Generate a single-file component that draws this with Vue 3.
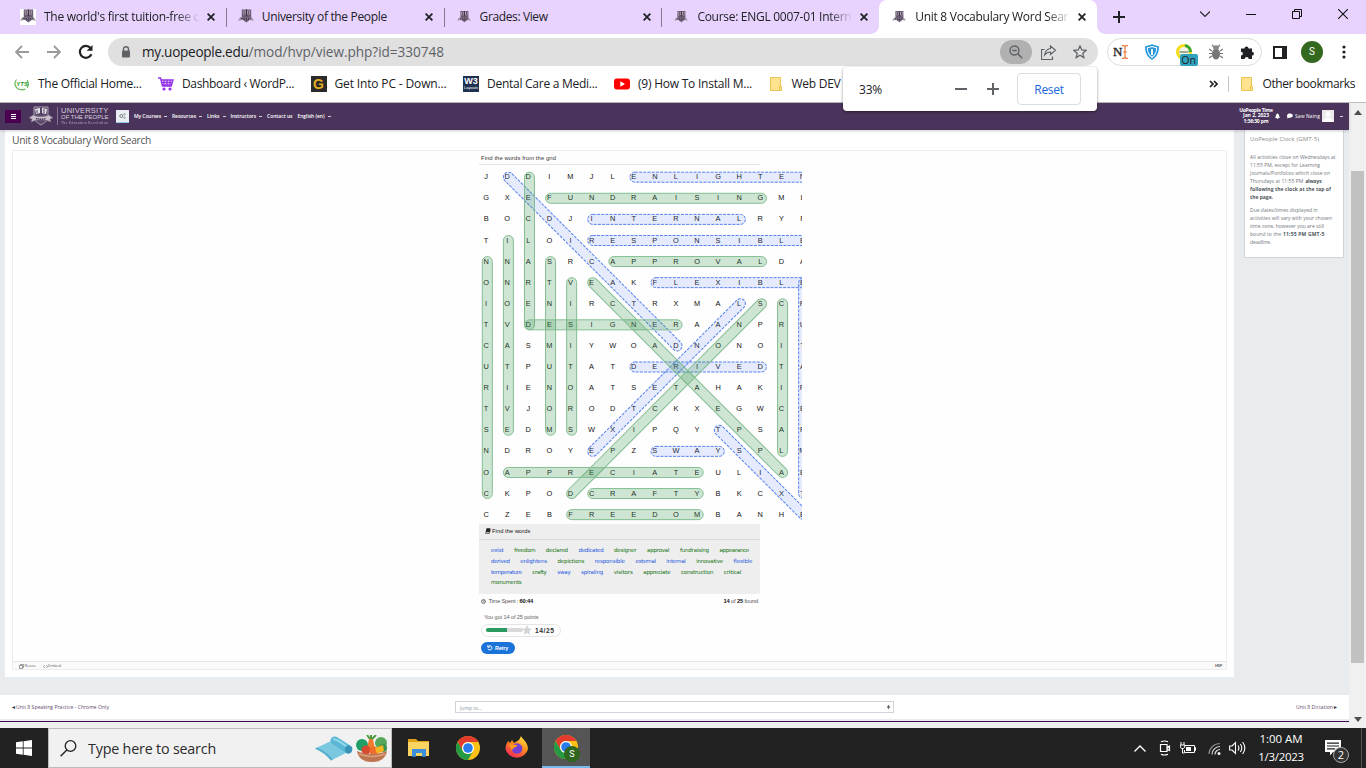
<script setup>
const fit = (el, { value }) => {
  el.style.letterSpacing = '0px'
  const n = el.textContent.length
  const w = el.getBoundingClientRect().width
  el.style.letterSpacing = (value - w) / n + 'px'
}
const vFit = { mounted: fit }

const tabs = [
  { t: "The world's first tuition-free c", w: 155, cls: 'fade', box: true },
  { t: 'University of the People', w: 125 },
  { t: 'Grades: View', w: 68 },
  { t: 'Course: ENGL 0007-01 Intern', w: 154, cls: 'fade last' },
  { t: 'Unit 8 Vocabulary Word Sear', w: 153, cls: 'fade', active: true },
]

const menu = [
  ['My Courses', 27, 1], ['Resources', 24, 1], ['Links', 12.5, 1],
  ['Instructors', 25.5, 1], ['Contact us', 25.5, 0], ['English (en)', 27, 1],
]

const rows = [
  'JDDIMJLENLIGHTEN', 'GXEFUNDRAISINGML', 'BOCDJINTERNALRYF', 'TILOIRESPONSIBLE',
  'NNASRCAPPROVALDA', 'ONRTVEAKFLEXIBLE', 'IOENIRCTRXMALSCR', 'TVDESIGNERAANPRU',
  'CASMIYWOADNONOIT', 'UTPUTATDERIVEDTA', 'RIENOATSETAHAKIR', 'TVJORODTCKXEGWCE',
  'SEDMSWXIPQYTPSAP', 'NDROYEPZSWAYSPLM', 'OAPPRECIATEULIAE', 'CKPODCRAFTYBKCXT',
  'CZEBFREEDOMBANHE',
]
const P = 21.09
const found = [
  [2, 0, 2, 7], [3, 1, 13, 1], [6, 4, 13, 4], [1, 3, 1, 12], [0, 4, 0, 15], [3, 4, 3, 12],
  [4, 5, 4, 12], [2, 7, 9, 7], [5, 5, 14, 14], [4, 15, 13, 6], [14, 6, 14, 13],
  [1, 14, 10, 14], [5, 15, 10, 15], [4, 16, 10, 16],
]
const missed = [
  [1, 0, 9, 8], [7, 0, 16, 0], [5, 2, 12, 2], [5, 3, 15.6, 3], [8, 5, 15.6, 5],
  [5, 13, 12, 6], [7, 9, 13, 9], [8, 13, 11, 13], [11, 12, 15, 16], [15, 5, 15, 15],
]
const capsule = ([a, b, c, d]) => {
  const x = 9.3 + a * P
  const y = 12.2 + b * P
  const len = Math.hypot(c - a, d - b) * P
  const ang = (Math.atan2(d - b, c - a) * 180) / Math.PI
  return { x: x - 5, y: y - 5, width: len + 10, height: 10, rx: 5, transform: `rotate(${ang} ${x} ${y})` }
}

const words = [
  [['exist', 38, 1], ['freedom', 63], ['declared', 66], ['dedicated', 75, 1], ['designer', 67], ['approval', 67], ['fundraising', 87], ['appearance', 88]],
  [['derived', 56, 1], ['enlightens', 80, 1], ['depictions', 80], ['responsible', 90, 1], ['external', 61, 1], ['internal', 58, 1], ['innovative', 80], ['flexible', 56, 1]],
  [['temperature', 92, 1], ['crafty', 43], ['sway', 40, 1], ['spiraling', 66, 1], ['visitors', 57], ['appreciate', 81], ['construction', 97], ['critical', 52]],
  [['monuments', 91]],
]

const bookmarks = [
  { i: 'yts', t: 'The Official Home...', w: 103.5 },
  { i: 'cart', t: 'Dashboard ‹ WordP...', w: 112 },
  { i: 'g', t: 'Get Into PC - Down...', w: 112 },
  { i: 'w3', t: 'Dental Care a Medi...', w: 110.5 },
  { i: 'yt', t: '(9) How To Install M...', w: 114 },
  { i: 'folder', t: 'Web DEV', w: 49 },
]
</script>

<template>
  <div class="screen">
    <svg class="defs" width="0" height="0">
      <symbol id="crest" viewBox="0 0 24 20">
        <path d="M5 1h14v10c0 4-4 6-7 8-3-2-7-4-7-8z" fill="#5d4a6b" stroke="#aaa1b1" stroke-width="1" />
        <path d="M6 3l5-1v5L7 8zM13 2l5 1-1 5-4-1z" fill="#e7e3ea" />
        <path d="M8 4v3M15 3v4M12 1v8" stroke="#4b345b" stroke-width="1" />
        <path d="M0 12l4-3c5 2 11 2 16 0l4 3-3 1 1 3c-7-3-13-3-20 0l1-3z" fill="#c6bfcb" stroke="#77687f" stroke-width=".6" />
        <path d="M7 12.500c3 .8 7 .8 10 0" stroke="#4b345b" stroke-width="1.400" fill="none" stroke-dasharray="1.400 .6" />
      </symbol>
      <symbol id="favicon" viewBox="0 0 17 15">
        <path d="M4 0h10v8c0 3-3 4-5 6-2-2-5-3-5-6z" fill="#6b5c73" />
        <path d="M5 1.500l3-.5v4l-2.500.5zM10 1l3 .5-.5 4-2.500-.5z" fill="#c9c3cd" />
        <path d="M6.500 1.500v3.500M11.500 1.500v3.500M9 0v7" stroke="#3a2843" />
        <path d="M0 12l2.500-4c4 1.300 8 1.300 12 0l2.500 4-3-.5c-4-1.500-7-1.500-11 0z" fill="#9c93a1" />
        <path d="M3.500 9.600q5 1.200 10 0" stroke="#33233c" stroke-width="1.400" fill="none" stroke-dasharray="1.600 .7" />
      </symbol>
      <symbol id="chrome" viewBox="0 0 24 24">
        <circle cx="12" cy="12" r="12" fill="#fbc116" />
        <path d="M1.600 6A12 12 0 0 1 22.400 6H12a6 6 0 0 0-5.200 9z" fill="#e33b2e" />
        <path d="M1.600 6A12 12 0 0 0 12 24l5.200-9a6 6 0 0 1-10.400 0z" fill="#249a45" />
        <circle cx="12" cy="12" r="6" fill="#fff" /><circle cx="12" cy="12" r="4.800" fill="#2a7bee" />
      </symbol>
      <symbol id="folder" viewBox="0 0 12 14">
        <path d="M.5.5h10v13H.5z" fill="#ffe38e" stroke="#e9c452" /><path d="M9.500 9.500h2v4h-2z" fill="#ffe38e" stroke="#e9c452" />
      </symbol>
    </svg>

    <header class="tabs">
      <div v-for="(tab, i) in tabs" :key="i" class="tab" :class="{ active: tab.active, divided: i < 3 }">
        <span class="fav" :class="{ boxed: tab.box, small: i > 1 }"><svg width="16" height="15" ><use href="#favicon" /></svg></span>
        <span class="label" :class="tab.cls"><span v-fit="tab.w">{{ tab.t }}</span></span>
        <svg class="close" width="8" height="8" viewBox="0 0 8 8"><path d="M.6.6l6.800 6.800M7.400.6L.6 7.400" stroke="#202124" stroke-width="1.800" /></svg>
      </div>
      <svg class="plus" width="12" height="12"><path d="M6 0v12M0 6h12" stroke="#202124" stroke-width="2" /></svg>
      <div class="winctl">
        <svg width="10" height="10"><path d="M0 2.500l5 5 5-5" fill="none" stroke="#222" stroke-width="1.100" /></svg>
        <svg width="10" height="10"><path d="M0 5.500h10" stroke="#111" /></svg>
        <svg width="10" height="10"><path d="M.5 2.500h7v7h-7zM2.500 2.500v-2h7v7h-2" fill="none" stroke="#111" /></svg>
        <svg width="10" height="10"><path d="M0 0l10 10M10 0L0 10" stroke="#111" stroke-width="1.100" /></svg>
      </div>
    </header>

    <div class="toolbar">
      <svg class="nav1" width="14" height="14"><path d="M14 7H1M7 1L1 7l6 6" fill="none" stroke="#9a9a9a" stroke-width="1.800" /></svg>
      <svg class="nav2" width="14" height="14"><path d="M0 7h13M7 1l6 6-6 6" fill="none" stroke="#9a9a9a" stroke-width="1.800" /></svg>
      <svg class="nav3" width="16" height="16"><path d="M13.400 10.200A6 6 0 1 1 12.500 4" fill="none" stroke="#202124" stroke-width="2.200" /><path d="M14.500 1v5.800H8.700z" fill="#202124" /></svg>
      <div class="omni">
        <svg width="10" height="12"><path d="M2.500 5V3a2.500 2.300 0 0 1 5 0v2" fill="none" stroke="#5f6368" stroke-width="1.400" /><rect x="1" y="4.400" width="8" height="7" rx="1" fill="#5f6368" /></svg>
        <span class="url"><b v-fit="106.500">my.uopeople.edu</b><i v-fit="195.500">/mod/hvp/view.php?id=330748</i></span>
        <span class="zoomchip"><svg width="14" height="14"><circle cx="5.500" cy="5.500" r="4.500" fill="none" stroke="#5f6368" stroke-width="1.400" /><path d="M3.300 5.500h4.400M8.800 8.800l4.400 4.400" stroke="#5f6368" stroke-width="1.500" /></svg></span>
        <svg class="share" width="16" height="15"><path d="M3.500 4.500h-3v10h11v-3" fill="none" stroke="#5f6368" stroke-width="1.200" /><path d="M9.500 1l5 4.200-5 4.200V7C7 7 5 8.200 3.600 10 4 6.500 6 4 9.500 3.500z" fill="none" stroke="#5f6368" stroke-width="1.200" /></svg>
        <svg class="star" width="14" height="14" viewBox="0 0 14 14"><path d="M7 1l1.800 4 4.300.4-3.300 2.900 1 4.300L7 10.300l-3.800 2.300 1-4.300L.9 5.400 5.200 5z" fill="none" stroke="#5f6368" stroke-width="1.300" /></svg>
      </div>
      <div class="exts">
        <span class="nicon">N<svg width="6" height="14"><path d="M0 .7h2l1 1 1-1h2M3 1.500v11M0 13.300h2l1-1 1 1h2M1 7h4" fill="none" stroke="#ee7b3c" stroke-width="1.200" /></svg></span>
        <svg width="14" height="16" viewBox="0 0 16 16" preserveAspectRatio="none"><path d="M0 2.500L8 .3l8 2.200C16 9 13 13.500 8 15.800 3 13.500 0 9 0 2.500z" fill="#2396de" /><path d="M2.500 4L8 2.500 13.500 4c-.3 4.500-2.200 7.500-5.500 9.400C4.700 11.500 2.800 8.500 2.500 4z" fill="none" stroke="#fff" stroke-width="1.100" /><path d="M8 5v6" stroke="#fff" stroke-width="2.200" /></svg>
        <span class="seo"><svg width="17" height="16"><circle cx="8" cy="8" r="6.500" fill="#f5f5ed" stroke="#f2dc1c" stroke-width="3" /><path d="M9 1.500A6.500 6.500 0 0 1 14.500 8" fill="none" stroke="#35a83b" stroke-width="3" /><path d="M3.500 8h9" stroke="#88906b" stroke-width="1.500" /></svg><em>On</em></span>
        <svg width="14" height="16"><g stroke="#777" stroke-width="1.200"><path d="M0 5l3 2M14 5l-3 2M0 9.500h14M0 14l3-2M14 14l-3-2M3 1l2 2M11 1L9 3" /></g><ellipse cx="7" cy="10" rx="4" ry="5.500" fill="#777" /><ellipse cx="7" cy="3.600" rx="3" ry="2.300" fill="#888" /></svg>
        <svg width="15" height="15" viewBox="0 0 15 15"><path d="M1 3.500h3.500a2 2 0 1 1 4 0H12v3.300a1.900 1.900 0 1 1 0 3.800V14H8.700a2 2 0 0 0-4 0H1v-3.500a1.900 1.900 0 0 0 0-3.800z" fill="#202124" /></svg>
      </div>
      <svg class="side" width="14" height="13"><path d="M1 1h12v11H1z" fill="none" stroke="#202124" stroke-width="2" /><path d="M9 1h4v11H9z" fill="#202124" /></svg>
      <span class="me">S</span>
      <svg class="dots" width="4" height="14"><circle cx="2" cy="2" r="1.600" /><circle cx="2" cy="7" r="1.600" /><circle cx="2" cy="12" r="1.600" /></svg>
    </div>

    <div class="bookmarks">
      <div v-for="b in bookmarks" :key="b.t" class="bm" :class="b.i">
        <svg v-if="b.i === 'yts'" width="16" height="16"><path d="M2.500 3.500a6.500 6.500 0 0 0 0 8c2 2.500 6 3 9 1.500M13 4a7 7 0 0 1 0 8" fill="none" stroke="#64b956" stroke-width="1.200" /><text x="2.300" y="10" class="ytst">YTS</text></svg>
        <svg v-else-if="b.i === 'cart'" width="16" height="15"><path d="M0 1h2.500l2 8H14M3 3h12l-1.500 5H4M6 3v5M9 3v5M12 3v5M3.500 5.500h11" fill="none" stroke="#9333ea" stroke-width="1.400" /><circle cx="6" cy="12" r="1.600" fill="#9333ea" /><circle cx="12" cy="12" r="1.600" fill="#9333ea" /></svg>
        <span v-else-if="b.i === 'g'" class="gsq">G</span>
        <span v-else-if="b.i === 'w3'" class="wsq">W3<small>Layouts</small></span>
        <svg v-else-if="b.i === 'yt'" width="16" height="12"><rect y=".5" width="16" height="11" rx="3" fill="#f00" /><path d="M6.300 3.300v5.400L11 6z" fill="#fff" /></svg>
        <svg v-else width="12" height="14"><use href="#folder" /></svg>
        <span class="bt"><span v-fit="b.w">{{ b.t }}</span></span>
      </div>
      <svg class="more" width="9" height="8"><path d="M1 1l3 3-3 3M5 1l3 3-3 3" fill="none" stroke="#202124" stroke-width="1.700" /></svg>
      <i class="bsep"></i>
      <svg class="of" width="12" height="14"><use href="#folder" /></svg>
      <span class="bt other"><span v-fit="92.500">Other bookmarks</span></span>
    </div>

    <div class="zoompop">
      <span class="pct"><span v-fit="23">33%</span></span>
      <svg class="zm" width="12" height="12"><path d="M0 6h12" stroke="#5f6368" stroke-width="2" /></svg>
      <svg class="zp" width="12" height="12"><path d="M6 0v12M0 6h12" stroke="#5f6368" stroke-width="2" /></svg>
      <button class="reset"><span v-fit="29.500">Reset</span></button>
    </div>

    <div class="viewport">
      <div class="page">
        <nav class="navbar">
          <span class="burger"><svg width="5" height="5"><path d="M0 .5h5M0 2.500h5M0 4.500h5" stroke="#fff" /></svg></span>
          <svg class="logo" width="24" height="20"><use href="#crest" /></svg>
          <div class="brand"><span class="b1" v-fit="47.500">UNIVERSITY</span><span class="b2" v-fit="47.500">OF THE PEOPLE</span><span class="b3" v-fit="47">The Education Revolution</span></div>
          <span class="gear"><svg width="7" height="6"><circle cx="2.300" cy="3" r="1.500" fill="none" stroke="#777" /><circle cx="5.500" cy="1.300" r=".8" fill="none" stroke="#888" stroke-width=".7" /><circle cx="5.500" cy="4.700" r=".8" fill="none" stroke="#888" stroke-width=".7" /></svg></span>
          <div class="menu"><span v-for="m in menu" :key="m[0]" class="mi"><span v-fit="m[1]">{{ m[0] }}</span><i v-if="m[2]"></i></span></div>
          <div class="clock"><span v-fit="33.500">UoPeople Time</span><span v-fit="26">Jan 2, 2023</span><span v-fit="25">1:36:30 pm</span></div>
          <svg class="bell" width="5" height="6"><path d="M0 5c1-1 .6-3 1.500-3.800L2.500.3l1 .9C4.400 2 4 4 5 5zM1.700 5.300h1.600v.7H1.700z" fill="#fff" /></svg>
          <svg class="chat" width="7" height="6"><path d="M1 5.500L1.500 4C.3 2.500 1.500.5 3.800.5S7 1.500 6.800 3 4.500 4.800 3 4.700z" fill="#fff" /></svg>
          <span class="uname"><span v-fit="25">Saw Naing</span></span>
          <svg class="uava" width="12" height="12"><path d="M0 0h12v12H0z" fill="#eceaea" /><circle cx="6" cy="4.300" r="2.500" fill="#fff" /><path d="M1.500 12c0-6 9-6 9 0z" fill="#fff" /></svg>
          <i class="ucaret"></i>
        </nav>

        <div class="cols">
          <main class="main">
            <h1><span v-fit="139">Unit 8 Vocabulary Word Search</span></h1>
            <div class="frame">
              <section class="game">
                <div class="task"><span v-fit="75">Find the words from the grid</span></div>
                <svg class="grid" width="324" height="356" viewBox="0 0 324 356">
                  <g class="letters">
                    <template v-for="(r, y) in rows" :key="y">
                      <text v-for="(c, x) in r" :key="x" :x="8.100 + x * P" :y="14.300 + y * P">{{ c }}</text>
                    </template>
                  </g>
                  <rect v-for="(w, i) in missed" :key="'m' + i" class="missed" v-bind="capsule(w)" />
                  <rect v-for="(w, i) in found" :key="'f' + i" class="found" v-bind="capsule(w)" />
                </svg>
                <div class="vocab">
                  <div class="vh"><svg width="6" height="6"><path d="M1.500.3h4L4.600 4.300H.6z" fill="#222" /><path d="M.6 4.300v1.200h3.700l1.200-4" fill="none" stroke="#222" stroke-width=".6" /></svg><span v-fit="38.500">Find the words</span></div>
                  <div v-for="(r, i) in words" :key="i" class="vr">
                    <span v-for="w in r" :key="w[0]" :class="{ blue: w[2] }" v-fit="w[1] / 3">{{ w[0] }}</span>
                  </div>
                </div>
                <div class="status">
                  <svg width="5" height="5"><circle cx="2.500" cy="2.500" r="1.900" fill="none" stroke="#444" stroke-width=".8" /><path d="M2.500 1.300v1.400h1" fill="none" stroke="#444" stroke-width=".6" /></svg>
                  <span class="ts" v-fit="29.500">Time Spent :</span><b v-fit="13.500">60:44</b>
                  <span class="cnt" v-fit="34.500"><b>14</b> of <b>25</b> found</span>
                </div>
                <div class="got"><span v-fit="54.500">You got 14 of 25 points</span></div>
                <div class="score"><span class="meter"><i></i></span><svg width="10" height="10" viewBox="0 0 10 10"><path d="M5 0l1.500 3.300 3.500.4-2.600 2.400.7 3.600L5 7.900 1.900 9.700l.7-3.600L0 3.700l3.500-.4z" fill="#d4d6d6" /></svg><b v-fit="19.500">14/25</b></div>
                <div class="retry"><svg width="6" height="6"><path d="M1 3.800A2.100 2.100 0 1 0 1.500 1.300M.8.2v2h2" fill="none" stroke="#fff" stroke-width="1" /></svg><span v-fit="13">Retry</span></div>
              </section>
              <div class="h5bar">
                <svg width="5" height="5"><path d="M.5 1.500h3v3h-3zM1.500 1.500v-1h3v3h-1" fill="none" stroke="#777" stroke-width=".7" /></svg><span v-fit="11.500">Reuse</span>
                <svg class="emb" width="5" height="5"><path d="M1.700 1L.4 2.500 1.700 4M3.300 1l1.300 1.500L3.300 4" fill="none" stroke="#777" stroke-width=".7" /></svg><span v-fit="13">Embed</span>
                <b v-fit="7">H5P</b>
              </div>
            </div>
          </main>
          <aside class="block">
            <h2><span v-fit="69">UoPeople Clock (GMT-5)</span></h2>
            <p>
              <span><s v-fit="85.700">All activities close on Wednesdays at</s></span>
              <span><s v-fit="70">11:55 PM, except for Learning</s></span>
              <span><s v-fit="80">Journals/Portfolios which close on</s></span>
              <span><s v-fit="53.200">Thursdays at 11:55 PM</s><b class="gap" v-fit="16.300">always</b></span>
              <span><b v-fit="81">following the clock at the top of</b></span>
              <span><b v-fit="23">the page.</b></span>
            </p>
            <p>
              <span><s v-fit="67.700">Due dates/times displayed in</s></span>
              <span><s v-fit="82">activities will vary with your chosen</s></span>
              <span><s v-fit="74">time zone, however you are still</s></span>
              <span><s v-fit="31">bound to the</s><b class="gap" v-fit="41.500">11:55 PM GMT-5</b></span>
              <span><s v-fit="21.500">deadline.</s></span>
            </p>
          </aside>
        </div>

        <footer class="jump">
          <span class="prev"><i>◄</i><span v-fit="93">Unit 8 Speaking Practice - Chrome Only</span></span>
          <div class="sel"><span v-fit="22">Jump to...</span><svg width="3" height="4"><path d="M0 1.700L1.500 0 3 1.700zM0 2.300L1.500 4 3 2.300z" fill="#333" /></svg></div>
          <span class="next"><span v-fit="37">Unit 8 Dictation</span><i>►</i></span>
        </footer>
        <div class="pageend"></div>
      </div>
      <div class="scroll">
        <svg width="8" height="5"><path d="M0 5l4-5 4 5z" fill="#505050" /></svg>
        <div class="thumb"></div>
        <svg class="dn" width="8" height="5"><path d="M0 0l4 5 4-5z" fill="#505050" /></svg>
      </div>
    </div>

    <div class="taskbar">
      <div class="start"><svg width="16" height="16"><path d="M0 2.300L6.800 1.300v6.300H0zM7.600 1.200L16 0v7.600H7.600zM0 8.400h6.800v6.300L0 13.700zM7.600 8.400H16V16l-8.400-1.200z" fill="#fff" /></svg></div>
      <div class="search">
        <svg width="17" height="17"><circle cx="10.500" cy="6" r="5.300" fill="none" stroke="#222" stroke-width="1.300" /><path d="M6.800 9.900L.6 16.200" stroke="#222" stroke-width="1.400" /></svg>
        <span class="stx"><span v-fit="128">Type here to search</span></span>
        <svg class="mat" width="38" height="25"><path d="M0 12.500L16 5l17 11-17 8.500c-4-5-9-9-16-12z" fill="#7ac8e0" /><path d="M0 12.500c7 3 12 7 16 12l2-1c-4-5-9-9-16-12z" fill="#58aecb" /><path d="M17 1.500c2-1.500 4-1 6 .2L36 10c3 3 1 8-4 7.500L17 7.500c-2-2-2-4.500 0-6z" fill="#59b6d4" /><path d="M18 3c4 0 10 5 16 9" stroke="#92d7ea" stroke-width="2" fill="none" /><ellipse cx="33.500" cy="13.500" rx="3.500" ry="4" fill="#3a94b8" /></svg>
        <svg class="bowl" width="32" height="27"><circle cx="6" cy="10" r="6" fill="#1f9f67" /><circle cx="25" cy="8" r="6" fill="#55a85c" /><circle cx="27" cy="13" r="4" fill="#3c9250" /><path d="M11 14l2-10h4l2 10z" fill="#f07c2e" /><path d="M14 4L11 0M15 4V0M16 4l4-4" stroke="#4c9a3d" stroke-width="2" /><circle cx="10" cy="15" r="4.500" fill="#d9492f" /><circle cx="18" cy="16" r="4.500" fill="#ee6b2b" /><path d="M19 13l8-3 1 6-7 3z" fill="#f6b51e" /><path d="M1 16c8 4 21 4 30 0-1 6-5 11-15 11S2 22 1 16z" fill="#bd7552" /><path d="M3 19c8 3 18 3 26 0" stroke="#dda17e" stroke-width="1.500" fill="none" /></svg>
      </div>
      <div class="app"><svg width="22" height="18"><path d="M0 0h8l2 2h11v5H0z" fill="#e2a217" /><path d="M0 3h21v14H0z" fill="#fcd462" /><path d="M4 17.800V10h14v7.800h-4V14H8v3.800z" fill="#3b8fdd" /></svg></div>
      <div class="app"><svg width="24" height="24"><use href="#chrome" /></svg></div>
      <div class="app"><svg width="24" height="24" viewBox="0 0 24 24"><defs><linearGradient id="fx" x1=".8" y1="0" x2=".2" y2="1"><stop offset="0" stop-color="#ffe847" /><stop offset=".45" stop-color="#ff8a1c" /><stop offset="1" stop-color="#f5205c" /></linearGradient></defs><path d="M3 5l2 2 2-3 2 3 5-3 2-4c1 3 7 6 7 13A11.500 11 0 0 1 .5 13C.5 9 2 7 3 5z" fill="url(#fx)" /><circle cx="12" cy="12.500" r="5.300" fill="#7540d2" /><path d="M4 9c3-1 5 0 8 0 1 2-3 2-4 4s-2 0-4-4z" fill="#ff9b1f" /></svg></div>
      <div class="app on"><svg width="24" height="24"><use href="#chrome" /></svg><em>S</em></div>
      <div class="tray">
        <svg width="12" height="7"><path d="M.5 6.500L6 1l5.500 5.500" fill="none" stroke="#fff" stroke-width="1.300" /></svg>
        <svg class="t2" width="12" height="16"><path d="M1.500 4.500h6.500v7H1.500zM8 7.500L10.500 6v4.500L8 9M2 1.800Q5.500.2 9 1.800M2 14.200Q5.500 15.800 9 14.200" fill="none" stroke="#fff" stroke-width="1.200" /></svg>
        <svg class="t3" width="16" height="12"><path d="M5 3.500h9.500v7H4.500V8M14.500 5.500h1v3h-1M1 0v3M4 0v3M.3 3h4.400v2L3.500 6.500H1.500L.3 5zM2.500 6v5h2" fill="none" stroke="#fff" /><path d="M6 5h5v4H6z" fill="#fff" /></svg>
        <svg class="t4" width="13" height="13"><path d="M1 12A11 11 0 0 1 12 1.500" fill="none" stroke="#888" stroke-width="1.200" /><path d="M4 12.500a8 8 0 0 1 8-8M7 12.500a5 5 0 0 1 5-5" fill="none" stroke="#ddd" stroke-width="1.200" /><circle cx="11" cy="11.500" r="1.500" fill="#fff" /></svg>
        <svg class="t5" width="17" height="14"><path d="M.6 5h2.500L6.500 1.500v11L3.100 9H.6z" fill="none" stroke="#fff" stroke-width="1.100" /><path d="M9 4.500q1.800 2.500 0 5M11.300 3q3 4 0 8M13.600 1q4.500 6 0 12" fill="none" stroke="#fff" stroke-width="1.100" /></svg>
        <div class="time"><span v-fit="43">1:00 AM</span><span v-fit="45.500">1/3/2023</span></div>
        <div class="notif"><svg width="16" height="16"><path d="M0 0h16v12H8l-3 3.500V12H0z" fill="#fff" /><path d="M2 3.200h12M2 6h12M2 8.800h8" stroke="#222" stroke-width="1.200" /></svg><em>2</em></div>
      </div>
    </div>
  </div>
</template>

<style>
body { margin: 0; overflow: hidden; }
</style>

<style scoped>
* { box-sizing: border-box; }
svg { display: block; flex: none; }
i, em { font-style: normal; }
s { text-decoration: none; }
.defs { position: absolute; }
.screen { position: relative; width: 1366px; height: 768px; overflow: hidden; display: flex; flex-direction: column; font-family: "Open Sans", "Noto Sans", sans-serif; white-space: nowrap; background: #fff; color: #202124; }
.screen span, .screen b, .block s { display: inline-block; flex: none; }

.tabs { height: 34px; background: #e8d3ff; display: flex; padding-left: 8px; flex: none; }
.tab { width: 217.8px; height: 34px; padding: 0 0 0 12px; display: flex; align-items: center; position: relative; flex: none; }
.tab.divided::after { content: ""; position: absolute; right: -1px; top: 8px; width: 1px; height: 19px; background: #82778e; }
.tab.active { background: #fff; border-radius: 8px 8px 0 0; }
.tab.active::before, .tab.active::after { content: ""; position: absolute; bottom: 0; width: 8px; height: 8px; }
.tab.active::before { left: -8px; background: radial-gradient(circle at 0 0, #e8d3ff 7.5px, #fff 8px); }
.tab.active::after { right: -8px; background: radial-gradient(circle at 8px 0, #e8d3ff 7.5px, #fff 8px); }
.fav { width: 16px; height: 16px; }
.fav.boxed { background: #fff; }
.fav.small svg { height: 12px; margin-top: 2px; }
.label { width: 156px; margin: 0 7px 0 8px; overflow: hidden; font-size: 12px; line-height: 20px; }
.fade { -webkit-mask-image: linear-gradient(90deg, #000 132px, transparent 156px); }
.plus { margin: 11px 0 0 16px; }
.winctl { display: flex; gap: 36px; margin: 9px 0 0 75px; }

.toolbar { height: 36px; display: flex; align-items: center; flex: none; }
.nav1 { margin-left: 15px; }
.nav2 { margin-left: 18px; }
.nav3 { margin-left: 17px; }
.omni { margin-left: 14px; width: 990px; height: 28px; background: #e0e0e0; border-radius: 14px; display: flex; align-items: center; }
.omni > svg:first-child { margin: 0 11px 0 13px; }
.url { width: 858px; font-size: 13.6px; line-height: 20px; }
.url b { font-weight: 400; }
.url i { display: inline-block; color: #5f6368; }
.screen .zoomchip { width: 32px; height: 24px; background: #b1b1b1; border-radius: 12px; padding: 5px 8px 0 9px; }
.share { margin-left: 9px; }
.star { margin-left: 16px; }
.exts { margin-left: 9px; width: 155px; height: 28px; border: 1px solid #dcdcdc; border-radius: 14px; display: flex; align-items: center; padding: 0 6px 0 5px; justify-content: space-between; }
.screen .nicon { display: flex; align-items: center; font: 13px "Liberation Serif", serif; -webkit-text-stroke: .3px #202124; }
.seo { position: relative; height: 16px; }
.seo em { position: absolute; left: 4px; top: 10px; width: 18px; height: 12px; background: #31a2bd; border-radius: 2px; font: 10.5px/12px "Open Sans", sans-serif; text-align: center; }
.side { margin-left: 11px; }
.me { margin-left: 14px; width: 22px; height: 22px; border-radius: 50%; background: #33691e; color: #fff; font: 10px/22px Roboto, sans-serif; text-align: center; }
.dots { margin-left: 19px; fill: #202124; }

.bookmarks { height: 33px; border-bottom: 1px solid #bdbdbd; display: flex; align-items: center; padding: 0 11px 4px 14px; flex: none; }
.bm { display: flex; align-items: center; gap: 8px; margin-right: 16.5px; }
.bm.folder { gap: 10px; margin: 0 0 0 1px; }
.bt { font-size: 12px; line-height: 18px; }
.ytst { font: italic 700 6px "Liberation Sans", sans-serif; fill: #2d9a2d; }
.screen .gsq { width: 16px; height: 16px; background: #2a2a2a; color: #e2ad21; font: 700 14px/16px "Liberation Sans", sans-serif; text-align: center; }
.screen .wsq { width: 16px; height: 16px; background: #1e3250; color: #fff; font: 700 9px/10px "Liberation Sans", sans-serif; text-align: center; }
.wsq small { display: block; font-size: 4px; line-height: 4px; font-weight: 400; }
.more { margin-left: auto; }
.bsep { width: 1px; height: 16px; background: #c4c4c4; margin: 0 12px 0 10px; }
.other { margin-left: 10px; }

.zoompop { position: absolute; z-index: 5; left: 843px; top: 67px; width: 254px; height: 44px; background: #fff; border-radius: 4px; box-shadow: 0 1px 3px rgba(0, 0, 0, .45); display: flex; align-items: center; padding-left: 16px; }
.pct { font-size: 12px; }
.zm { margin-left: 73px; }
.zp { margin-left: 20px; }
.reset { margin: 0 0 0 18px; width: 64px; height: 32px; padding: 0; border: 1px solid #dadce0; border-radius: 4px; background: #fff; color: #1a67dc; font: 500 12px "Open Sans", sans-serif; }

.viewport { height: 625px; display: flex; flex: none; background: #f0f0f0; }
.page { width: 1349px; height: 619px; background: #e8ecef; display: flex; flex-direction: column; }
.navbar { height: 27px; background: #4b345b; display: flex; align-items: center; padding: 0 0 1px 5px; flex: none; color: #fff; box-shadow: 0 1px 3px rgba(0, 0, 0, .2); position: relative; z-index: 1; }
.screen .burger { width: 16px; height: 13px; background: #4c0050; display: flex; align-items: center; justify-content: center; }
.logo { margin-left: 8px; }
.brand { margin-left: 4px; width: 51px; height: 18px; border-left: 1px solid #84738f; padding-left: 3px; display: flex; flex-direction: column; color: #d6d0db; font-family: "Liberation Sans", sans-serif; align-items: flex-start; }
.b1 { font-size: 7.5px; line-height: 7px; }
.b2 { font-size: 6px; line-height: 6.5px; }
.b3 { font: 3.6px/4.5px "Liberation Serif", serif; opacity: .75; }
.screen .gear { width: 13px; height: 13px; background: #e9eff4; border-bottom: 1px solid #93c9e4; margin-left: 8px; display: flex; align-items: center; justify-content: center; }
.menu { display: flex; margin-left: 5px; font-size: 5px; line-height: 8px; font-weight: 600; width: 1105px; }
.screen .mi { display: flex; align-items: center; margin-right: 5px; }
.mi i, .ucaret { width: 3px; height: 1px; background: #d7d1dc; margin-left: 3px; }
.clock { width: 34px; display: flex; flex-direction: column; align-items: center; font-size: 5px; line-height: 5.5px; font-weight: 700; flex: none; }
.bell { margin-left: 2px; }
.chat { margin-left: 6px; }
.uname { margin-left: 2px; font-size: 5px; line-height: 8px; }
.uava { margin-left: 2px; }
.ucaret { margin-left: 6px; }

.cols { display: flex; align-items: flex-start; height: 565px; padding-left: 5px; flex: none; }
.main { width: 1229px; height: 547px; background: #fff; padding: 0 8px 0 7px; flex: none; }
h1 { margin: 0; height: 20px; font-size: 10.3px; line-height: 20px; font-weight: 400; color: #555; font-family: "Open Sans", sans-serif; }
.frame { width: 1215px; height: 520px; border: 1px solid #ededed; display: flex; flex-direction: column; background: #fefefe; }
.game { flex: 1; min-height: 0; padding-left: 466px; display: flex; flex-direction: column; align-items: flex-start; font-family: "Liberation Sans", sans-serif; font-size: 6px; }
.task { width: 281px; height: 14px; padding: 3px 0 0 2px; line-height: 8px; border-bottom: 1px solid #e3e3e3; color: #333; font-size: 5.8px; flex: none; }
.grid { margin: 0 0 3px -1px; overflow: hidden; }
.letters { font: 7.4px "Liberation Sans", sans-serif; text-anchor: middle; fill: #111; }
.found { fill: rgba(60, 150, 80, .24); stroke: #83be93; stroke-width: 1; }
.missed { fill: rgba(90, 130, 240, .15); stroke: #5580ee; stroke-width: 1; stroke-dasharray: 3 1.2; }
.vocab { width: 281px; height: 70px; background: #eee; flex: none; }
.vh { height: 16px; border-bottom: 1px solid #dcdcdc; display: flex; align-items: center; gap: 1px; padding: 0 0 1px 6px; color: #111; font-size: 5.7px; margin-bottom: 5px; }
.vr { display: flex; gap: 10.6px; padding-left: 12px; height: 10.8px; font: 5.5px/10.8px "DejaVu Sans", sans-serif; color: #12700f; }
.vr .blue { color: #2458e0; }
.status { width: 281px; height: 15px; display: flex; align-items: center; padding: 0 2px 1px 2px; color: #555; font-size: 5.7px; flex: none; }
.ts { margin: 0 1.5px 0 2.5px; }
.status b { color: #111; }
.cnt { margin-left: auto; }
.screen .cnt b { display: inline; }
.got { height: 15px; line-height: 16px; padding-left: 5px; color: #666; font-size: 5.6px; flex: none; }
.score { width: 80px; height: 13px; margin-left: 2px; border: 1px solid #e4e4e4; border-radius: 7px; display: flex; align-items: center; padding: 0 0 1px 4px; flex: none; color: #333; font-size: 6.7px; }
.screen .meter { width: 37px; height: 4px; background: #d8dada; border-radius: 2px; margin-right: -1px; }
.meter i { display: block; width: 21px; height: 4px; background: #2b9a60; border-radius: 2px 0 0 2px; }
.score b { margin-left: 3px; }
.retry { margin: 5px 0 0 2px; width: 34px; height: 12px; border-radius: 6px; background: #1a73d9; color: #fff; display: flex; align-items: center; gap: 2px; padding-left: 6px; font-size: 5.4px; font-weight: 700; flex: none; }
.h5bar { height: 8px; border-top: 1px solid #e6e6e6; background: #fafafa; display: flex; align-items: center; gap: .5px; padding: 1px 4px 0 6px; font-size: 4px; line-height: 6px; color: #666; flex: none; }
.h5bar .emb { margin-left: 6px; }
.h5bar b { margin-left: auto; }
.block { margin-left: 10px; width: 100px; height: 128px; border: 1px solid #cfd4d9; border-top: 0; background: #fff; padding-left: 5px; flex: none; color: #70767d; }
.block h2 { margin: 0 0 14px; height: 9px; padding-top: 4px; font-size: 6px; line-height: 10px; font-weight: 400; color: #8a8a8a; }
.block p { margin: 0 0 5px; font-size: 5px; line-height: 8.05px; }
.block p > span { display: block; height: 8.05px; }
.block b { color: #4d555c; }
.block .gap { margin-left: 2px; }
.jump { height: 24px; background: #fff; display: flex; align-items: center; flex: none; font-size: 5px; line-height: 8px; color: #5e4769; }
.screen .prev { width: 455px; padding-left: 11px; display: flex; align-items: center; }
.screen .next { display: flex; align-items: center; margin-left: 402px; }
.jump i { font-size: 5px; width: 5px; color: #333; }
.sel { width: 439px; height: 12px; border: 1px solid #ced4da; padding: 1px 3px 0 4px; display: flex; justify-content: space-between; align-items: center; color: #8a97a3; }
.sel svg { margin-top: -2px; }
.pageend { margin-top: auto; height: 1px; background: #43064f; }
.scroll { width: 17px; height: 625px; display: flex; flex-direction: column; align-items: center; padding-top: 7px; background: #f0f0f0; }
.thumb { width: 13px; height: 492px; background: #c1c1c1; margin-top: 56px; }
.dn { margin-top: 54px; }

.taskbar { height: 40px; background: #222; display: flex; flex: none; color: #fff; }
.start { width: 48px; display: flex; align-items: center; justify-content: center; }
.search { width: 344px; height: 40px; background: #f1f1f1; border: 1px solid #bcbcbc; display: flex; align-items: center; padding-left: 11px; color: #2b2b2b; }
.stx { margin-left: 11px; font-size: 14.3px; line-height: 20px; width: 227px; padding-top: 1px; }
.bowl { margin-left: 3px; }
.app { width: 48px; height: 40px; display: flex; align-items: center; justify-content: center; margin-right: 1px; position: relative; }
.search + .app { margin-left: 3px; }
.app.on { background: #555; border-bottom: 2px solid #76b9ed; }
.app em { position: absolute; left: 22px; top: 18px; width: 16px; height: 16px; border-radius: 50%; background: #2f661d; font: 9px/16px Roboto, sans-serif; text-align: center; }
.tray { margin-left: auto; display: flex; align-items: center; padding-right: 4px; border-right: 1px solid #555; margin-right: 4px; }
.t2 { margin-left: 13px; }
.t3 { margin-left: 9px; }
.t4 { margin-left: 12px; }
.t5 { margin-left: 8px; }
.time { width: 52px; margin-left: 9px; display: flex; flex-direction: column; align-items: center; font-size: 11.5px; line-height: 18px; }
.notif { position: relative; margin-left: 18px; width: 32px; height: 16px; }
.notif em { position: absolute; left: 8px; top: 7px; width: 16px; height: 16px; border-radius: 50%; border: 1px solid #aaa; background: #333; font: 11px/14px "Open Sans", sans-serif; text-align: center; }
</style>
